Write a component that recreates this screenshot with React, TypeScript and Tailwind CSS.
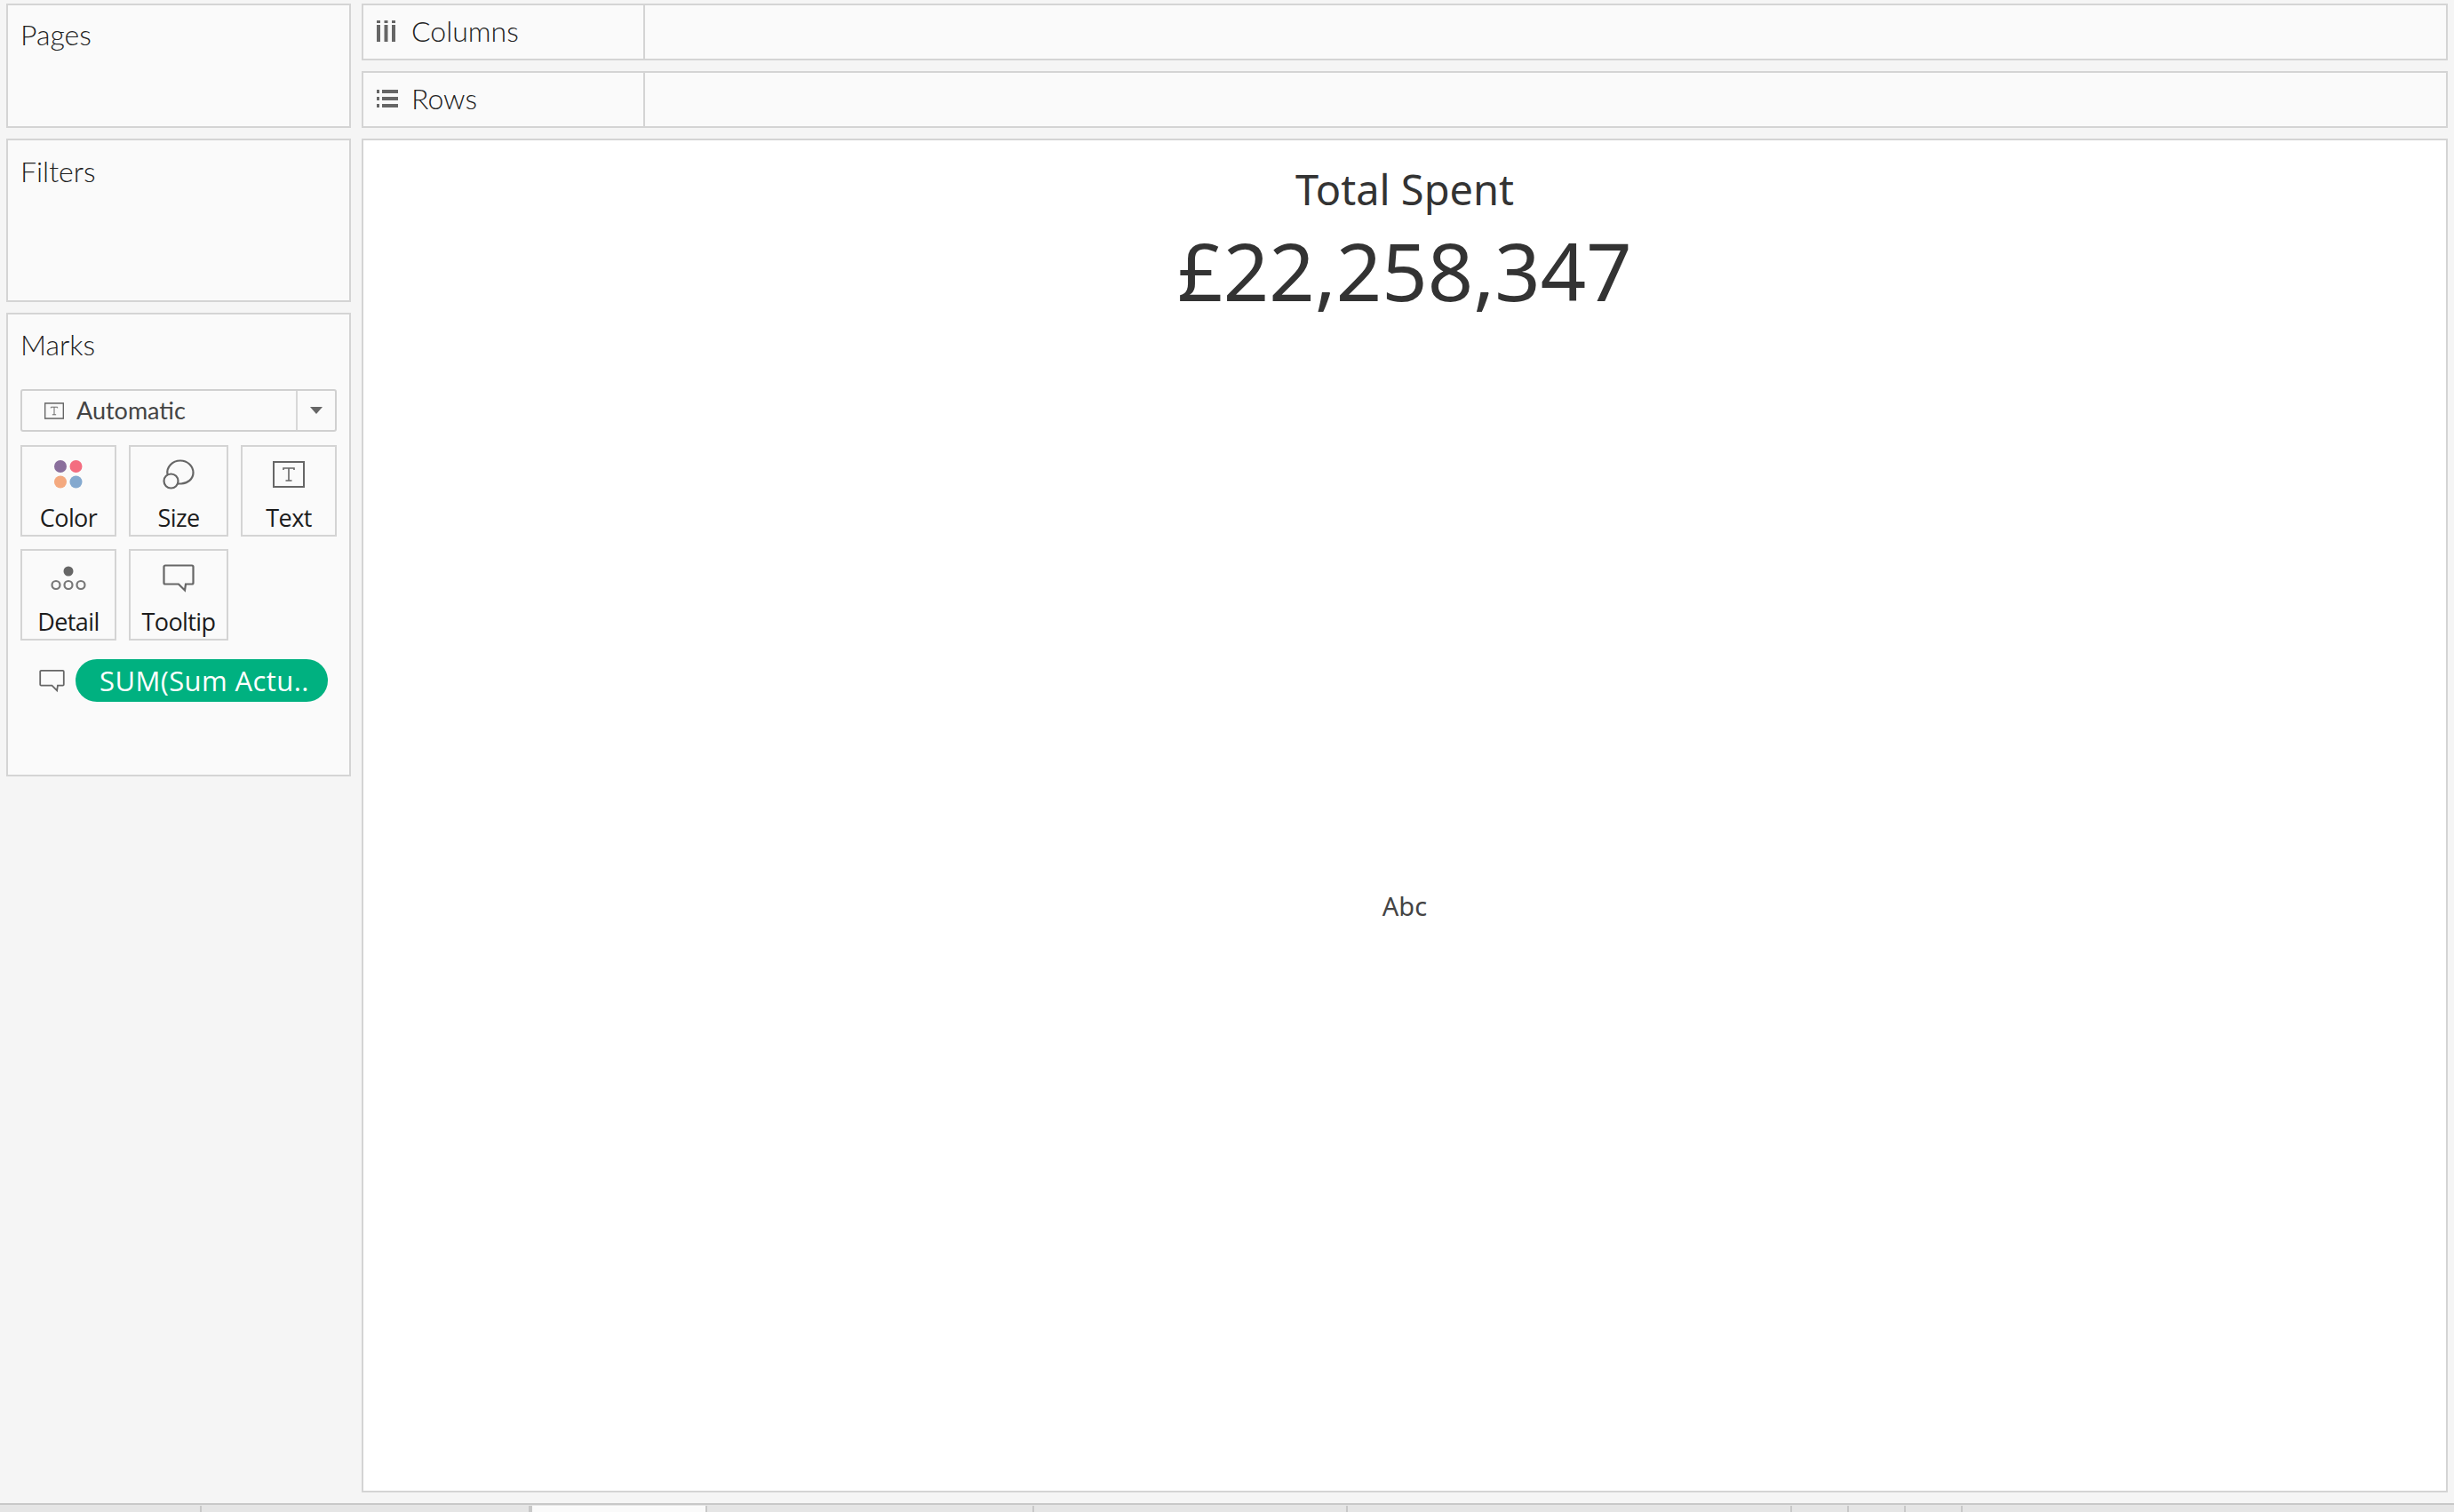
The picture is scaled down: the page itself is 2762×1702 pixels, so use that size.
const uiFont = "font-['Lato','Noto_Sans',sans-serif]";

function ColorIcon() {
  return (
    <svg viewBox="0 0 32 32" className="w-8 h-8">
      <circle cx="7" cy="7" r="7" fill="#8a6f9c" />
      <circle cx="24.5" cy="7" r="7" fill="#f46d80" />
      <circle cx="7" cy="24.5" r="7" fill="#f4a97f" />
      <circle cx="24.5" cy="24.5" r="7" fill="#84a9cf" />
    </svg>
  );
}

function SizeIcon() {
  return (
    <svg viewBox="0 0 36 34" className="w-9 h-[34px]" fill="none" stroke="#666" strokeWidth="2.200">
      <path d="M5.5 17C4 9 11 1.500 20 1.500c8 0 14.500 6 14.500 13.500S28 27 21 27.500l-4.500 0" />
      <circle cx="9.500" cy="24.500" r="8" fill="#fafafa" />
    </svg>
  );
}

function TextIcon({ small }: { small?: boolean }) {
  return (
    <svg viewBox="0 0 36 30" className={small ? "w-[22px] h-[19px]" : "w-9 h-[30px]"} fill="none" stroke="#666" strokeWidth={small ? 2.5 : 2}>
      <rect x="1" y="1" width="34" height="28" />
      <path d="M12 10V8h12v2M18 8v14M14.500 22h7" strokeWidth="1.600" />
    </svg>
  );
}

function DetailIcon() {
  return (
    <svg viewBox="0 0 40 28" className="w-10 h-7" fill="none" stroke="#777" strokeWidth="2.200">
      <circle cx="20" cy="6" r="5.500" fill="#666" stroke="none" />
      <circle cx="6" cy="21.500" r="4.500" />
      <circle cx="20" cy="21.500" r="4.500" />
      <circle cx="34" cy="21.500" r="4.500" />
    </svg>
  );
}

function TooltipIcon({ small }: { small?: boolean }) {
  return (
    <svg viewBox="0 0 36 32" className={small ? "w-[29px] h-[27px]" : "w-9 h-8"} fill="none" stroke="#666" strokeWidth="2.200">
      <path d="M3 1.500h30a1.500 1.500 0 0 1 1.500 1.500v18a1.500 1.500 0 0 1-1.500 1.500h-7l-1 7-7-7H3A1.500 1.500 0 0 1 1.500 21V3A1.500 1.500 0 0 1 3 1.500z" />
    </svg>
  );
}

function ColumnsIcon() {
  return (
    <svg viewBox="0 0 21 24" className="w-[21px] h-6" fill="#666">
      <rect x="0" y="0" width="4" height="3" />
      <rect x="0" y="5" width="4" height="19" />
      <rect x="8.500" y="0" width="4" height="3" />
      <rect x="8.500" y="5" width="4" height="19" />
      <rect x="17" y="0" width="4" height="3" />
      <rect x="17" y="5" width="4" height="19" />
    </svg>
  );
}

function RowsIcon() {
  return (
    <svg viewBox="0 0 24 20" className="w-6 h-5" fill="#666">
      <rect x="0" y="0" width="3" height="4" />
      <rect x="6" y="0" width="18" height="4" />
      <rect x="0" y="8" width="3" height="4" />
      <rect x="6" y="8" width="18" height="4" />
      <rect x="0" y="16" width="3" height="4" />
      <rect x="6" y="16" width="18" height="4" />
    </svg>
  );
}

function MarkCard({ label, icon }: { label: string; icon: React.ReactNode }) {
  return (
    <div className="h-[103px] border-2 border-[#d4d4d4] flex flex-col items-center pt-[13px]">
      <div className="h-[36px] flex items-center justify-center">{icon}</div>
      <div className="mt-[15px] leading-[32px] text-[27px] text-[#1c1c1c] font-['Open_Sans',sans-serif] tracking-[-0.6px]">{label}</div>
    </div>
  );
}

function Shelf({ label, icon }: { label: string; icon: React.ReactNode }) {
  return (
    <div className="h-[64px] flex border-2 border-[#d4d4d4] bg-[#fafafa]">
      <div className="w-[317px] border-r-2 border-[#d4d4d4] flex items-center pl-[15px] pb-[2px]">
        <div className="w-[39px]">{icon}</div>
        <span className="text-[32px] font-light text-[#222]">{label}</span>
      </div>
    </div>
  );
}

const tabs = [227, 370, 199, 368, 353, 500, 64, 64, 64];

export default function App() {
  return (
    <div className={`w-[2762px] h-[1702px] flex flex-col bg-[#f5f5f5] overflow-hidden ${uiFont}`}>
      <div className="flex-1 min-h-0 flex gap-[12px] pt-[4px] pl-[7px] pr-[7px] pb-[12px]">
        <div className="w-[388px] flex flex-col gap-[12px]">
          <div className="h-[140px] border-2 border-[#d4d4d4] bg-[#fafafa] pl-[14px] pt-[13px]">
            <span className="text-[32px] font-light leading-[40px] text-[#222]">Pages</span>
          </div>
          <div className="h-[184px] border-2 border-[#d4d4d4] bg-[#fafafa] pl-[14px] pt-[15px]">
            <span className="text-[32px] font-light leading-[40px] text-[#222]">Filters</span>
          </div>
          <div className="h-[522px] border-2 border-[#d4d4d4] bg-[#fafafa] px-[14px] pt-[14px]">
            <div className="text-[32px] font-light leading-[40px] text-[#222]">Marks</div>
            <div className="mt-[30px] h-[48px] border-2 border-[#d0d0d0] rounded-[3px] flex items-center">
              <div className="flex-1 flex items-center pl-[25px] gap-[14px]">
                <TextIcon small />
                <span className="text-[27px] text-[#444]">Automatic</span>
              </div>
              <div className="w-[44px] h-full border-l-2 border-[#d8d8d8] flex items-center justify-center">
                <div className="w-0 h-0 border-x-[7px] border-x-transparent border-t-[8px] border-t-[#666]" />
              </div>
            </div>
            <div className="mt-[15px] grid grid-cols-[108px_112px_108px] gap-[14px]">
              <MarkCard label="Color" icon={<ColorIcon />} />
              <MarkCard label="Size" icon={<SizeIcon />} />
              <MarkCard label="Text" icon={<TextIcon />} />
              <MarkCard label="Detail" icon={<DetailIcon />} />
              <MarkCard label="Tooltip" icon={<TooltipIcon />} />
            </div>
            <div className="mt-[21px] flex items-center pl-[21px] gap-[12px]">
              <TooltipIcon small />
              <div className="w-[284px] h-[48px] rounded-full bg-[#00b180] text-white text-[31px] tracking-[0.4px] flex items-center pl-[27px] whitespace-nowrap font-['Open_Sans',sans-serif]">
                SUM(Sum Actu..
              </div>
            </div>
          </div>
        </div>
        <div className="flex-1 flex flex-col gap-[12px]">
          <Shelf label="Columns" icon={<ColumnsIcon />} />
          <Shelf label="Rows" icon={<RowsIcon />} />
          <div className="flex-1 min-h-0 border-2 border-[#d4d4d4] bg-white flex flex-col items-center font-['Noto_Sans',sans-serif] text-[#333]">
            <div className="mt-[23px] text-[47px] leading-[64px]">Total Spent</div>
            <div className="mt-[4px] text-[90px] leading-[110px]">£22,258,347</div>
            <div className="flex-1 flex items-center justify-center pt-[3px] text-[29px] text-[#444]">Abc</div>
          </div>
        </div>
      </div>
      <div className="h-[10px] flex border-t-2 border-[#c8c8c8] bg-[#e5e5e5]">
        {tabs.map((w, i) => (
          <div
            key={i}
            style={{ width: w }}
            className={i === 2 ? "bg-[#fafafa] border-x-2 border-[#c8c8c8] mt-[1px]" : "border-r-2 border-[#c8c8c8] mt-[1px]"}
          />
        ))}
      </div>
    </div>
  );
}
